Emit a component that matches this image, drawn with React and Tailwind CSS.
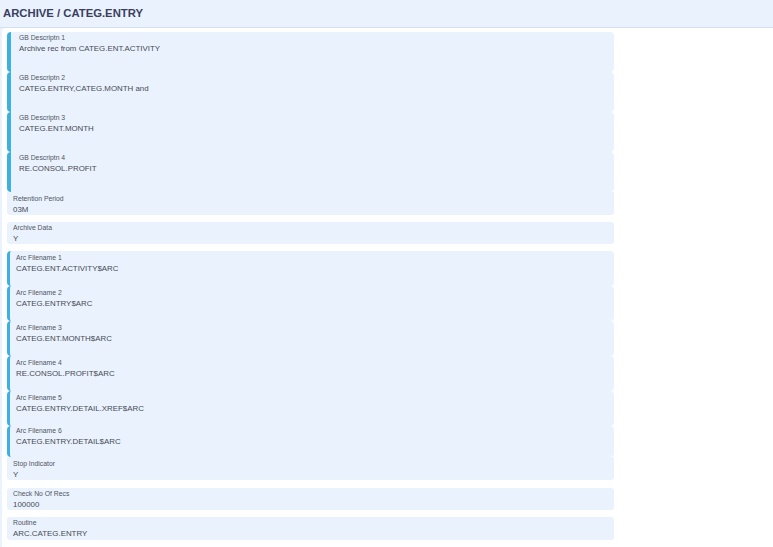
import React from "react";

const group1 = [
  ["GB Descriptn 1", "Archive rec from CATEG.ENT.ACTIVITY"],
  ["GB Descriptn 2", "CATEG.ENTRY,CATEG.MONTH and"],
  ["GB Descriptn 3", "CATEG.ENT.MONTH"],
  ["GB Descriptn 4", "RE.CONSOL.PROFIT"],
];

const group2 = [
  ["Arc Filename 1", "CATEG.ENT.ACTIVITY$ARC"],
  ["Arc Filename 2", "CATEG.ENTRY$ARC"],
  ["Arc Filename 3", "CATEG.ENT.MONTH$ARC"],
  ["Arc Filename 4", "RE.CONSOL.PROFIT$ARC"],
  ["Arc Filename 5", "CATEG.ENTRY.DETAIL.XREF$ARC"],
  ["Arc Filename 6", "CATEG.ENTRY.DETAIL$ARC"],
];

function Label({ children }) {
  return <div className="text-[6.8px] leading-[9px] text-[#50555f]">{children}</div>;
}
function Value({ children }) {
  return <div className="mt-[1px] text-[7.9px] leading-[11px] text-[#464b55]">{children}</div>;
}

export default function App() {
  return (
    <div className="w-[773px] h-[547px] bg-[#eaf2fd] overflow-hidden" style={{ fontFamily: '"Liberation Sans", Arial, sans-serif' }}>
      <div className="h-[28px] border-b border-[#d5e1f0] flex items-center pl-[3px]">
        <h1 className="text-[11.3px] font-bold text-[#3a3e60]">ARCHIVE / CATEG.ENTRY</h1>
      </div>
      <div className="ml-[2px] bg-white rounded-tl-[4px] h-full pt-[4px] pl-[5px]">
        {group1.map(([l, v]) => (
          <div key={l} className="w-[607px] h-[40px] rounded-[4px] border-l-4 border-[#3cb0e0] bg-[#eaf2fd] pl-[8px] pt-[1px]">
            <Label>{l}</Label>
            <Value>{v}</Value>
          </div>
        ))}
        <div className="w-[607px] h-[23px] rounded-b-[3px] bg-[#eaf2fd] pl-[6px] pt-[2px] mb-[7px]">
          <Label>Retention Period</Label>
          <Value>03M</Value>
        </div>
        <div className="w-[607px] h-[22px] rounded-[3px] bg-[#eaf2fd] pl-[6px] pt-[1px] mb-[7px]">
          <Label>Archive Data</Label>
          <Value>Y</Value>
        </div>
        {group2.map(([l, v], i) => (
          <div key={l} className={`w-[607px] ${i === 5 ? "h-[31px]" : "h-[35px]"} rounded-[4px] border-l-[3px] border-[#3cb0e0] bg-[#eaf2fd] pl-[6px] ${i === 5 ? "pt-[0px]" : "pt-[2px]"}`}>
            <Label>{l}</Label>
            <Value>{v}</Value>
          </div>
        ))}
        <div className="w-[607px] h-[23px] rounded-b-[3px] bg-[#eaf2fd] pl-[6px] pt-[2px] mb-[8px]">
          <Label>Stop Indicator</Label>
          <Value>Y</Value>
        </div>
        <div className="w-[607px] h-[22px] rounded-[3px] bg-[#eaf2fd] pl-[6px] pt-[1px] mb-[7px]">
          <Label>Check No Of Recs</Label>
          <Value>100000</Value>
        </div>
        <div className="w-[607px] h-[23px] rounded-[3px] bg-[#eaf2fd] pl-[6px] pt-[1px]">
          <Label>Routine</Label>
          <Value>ARC.CATEG.ENTRY</Value>
        </div>
      </div>
    </div>
  );
}
